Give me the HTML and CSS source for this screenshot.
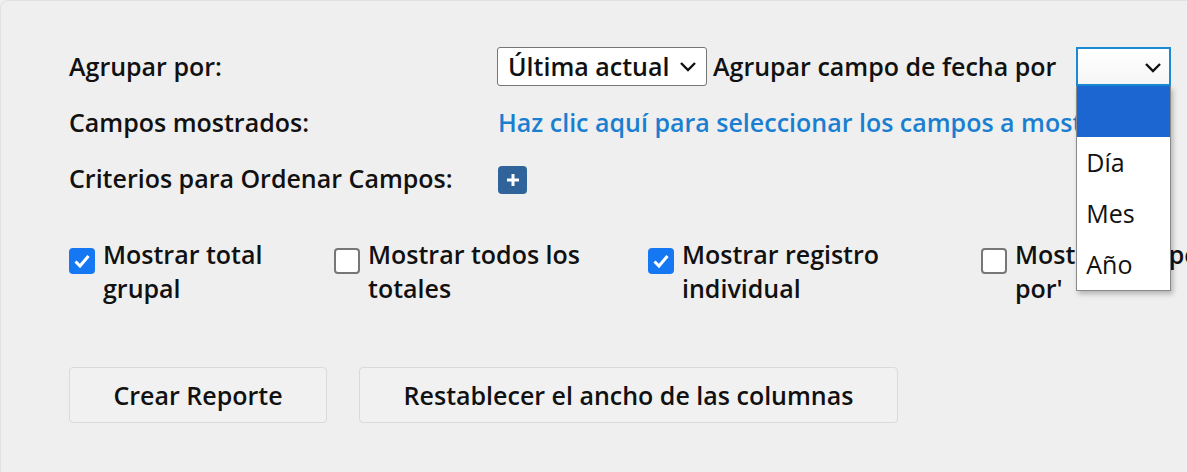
FILE: index.html
```html
<!DOCTYPE html>
<html lang="es">
<head>
    <meta charset="UTF-8">
    <title>Reporte</title>
    <link rel="stylesheet" href="styles.css">
</head>
<body>
    <div class="panel">
        <!-- Opciones de agrupacion -->
        <div class="options">
            <div class="opt-label">Agrupar por:</div>
            <div class="opt-value">
                <div class="select select-group">
                    <span>Última actual</span>
                    <svg class="chev" width="20" height="12" viewBox="0 0 20 12"><path d="M3 2 L10 9 L17 2" fill="none" stroke="#111" stroke-width="2.4"/></svg>
                </div>
                <span class="date-text">Agrupar campo de fecha por</span>
                <div class="date-wrap">
                    <div class="select select-date">
                        <svg class="chev" width="20" height="12" viewBox="0 0 20 12"><path d="M3 2 L10 9 L17 2" fill="none" stroke="#111" stroke-width="2.4"/></svg>
                    </div>
                    <!-- lista abierta -->
                    <ul class="dropdown">
                        <li class="selected">&nbsp;</li>
                        <li>Día</li>
                        <li>Mes</li>
                        <li>Año</li>
                    </ul>
                </div>
            </div>

            <div class="opt-label">Campos mostrados:</div>
            <div class="opt-value">
                <a class="link" href="#">Haz clic aquí para seleccionar los campos a mostrar</a>
            </div>

            <div class="opt-label">Criterios para Ordenar Campos:</div>
            <div class="opt-value">
                <button class="plus" type="button">
                    <svg width="16" height="16" viewBox="0 0 16 16"><path d="M8 2 V14 M2 8 H14" stroke="#fff" stroke-width="3"/></svg>
                </button>
            </div>
        </div>

        <!-- Checkboxes -->
        <div class="checks">
            <label class="check c1"><span class="box on"><svg width="18" height="16" viewBox="0 0 18 16"><path d="M2.5 8.5 L7 13 L15.5 3" fill="none" stroke="#fff" stroke-width="3"/></svg></span><span>Mostrar total grupal</span></label>
            <label class="check c2"><span class="box"></span><span>Mostrar todos los totales</span></label>
            <label class="check c3"><span class="box on"><svg width="18" height="16" viewBox="0 0 18 16"><path d="M2.5 8.5 L7 13 L15.5 3" fill="none" stroke="#fff" stroke-width="3"/></svg></span><span>Mostrar registro individual</span></label>
            <label class="check c4"><span class="box"></span><span>Mostrar campo 'Agrupar por'</span></label>
        </div>

        <div class="actions">
            <button class="btn btn-create" type="button">Crear Reporte</button>
            <button class="btn btn-reset" type="button">Restablecer el ancho de las columnas</button>
        </div>
    </div>
</body>
</html>
```

FILE: styles.css
```css
/* Pagina base */
html, body {
    margin: 0;
    padding: 0;
    background: #efefef;
    font-family: "Open Sans", "Noto Sans", sans-serif;
    color: #111;
    overflow: hidden;
}

.panel {
    width: 1400px;
    height: 472px;
    box-sizing: border-box;
    border-top: 1px solid #e2e2e2;
    border-left: 1px solid #e2e2e2;
    border-radius: 8px 0 0 0;
    padding: 45px 0 0 68px;
    font-size: 25px;
    font-weight: 600;
}

/* Grid de opciones */
.options {
    display: grid;
    grid-template-columns: 428px auto;
    grid-template-rows: 40px 40px 40px;
    row-gap: 16px;
    align-items: center;
}

.opt-value {
    display: flex;
    align-items: center;
}

.select {
    box-sizing: border-box;
    height: 39px;
    background: #fff;
    border: 1px solid #767676;
    border-radius: 3px;
    display: flex;
    align-items: center;
    position: relative;
}

.select-group {
    width: 210px;
    padding-left: 10px;
}

.select .chev {
    position: absolute;
    right: 8px;
    top: 13px;
}

.date-text {
    margin-left: 6px;
    margin-right: 20px;
}

.date-wrap {
    position: relative;
}

.select-date {
    width: 95px;
    border: 2px solid #1a8ad4;
    border-radius: 0;
    background: linear-gradient(#fff, #f6f6f6);
}

.select-date .chev {
    right: 6px;
}

/* Lista desplegada */
.dropdown {
    position: absolute;
    top: 39px;
    left: 0;
    width: 95px;
    box-sizing: border-box;
    margin: 0;
    padding: 0;
    list-style: none;
    background: #fff;
    border: 1px solid #8a8a8a;
    border-top: 0;
    box-shadow: 2px 3px 5px rgba(0, 0, 0, 0.25);
    font-weight: 400;
    z-index: 5;
}

.dropdown li {
    height: 51px;
    line-height: 51px;
    padding-left: 9px;
}

.dropdown li.selected {
    background: #1c66d1;
}

.link {
    color: #1a7fd1;
    text-decoration: none;
    white-space: nowrap;
    margin-left: 1px;
}

.plus {
    width: 29px;
    height: 28px;
    margin: 4px 0 0 1px;
    padding: 0;
    border: none;
    border-radius: 4px;
    background: #2f6399;
    display: flex;
    align-items: center;
    justify-content: center;
}

/* Checkboxes */
.checks {
    display: flex;
    margin-top: 39px;
    line-height: 34px;
}

.check {
    display: flex;
    align-items: flex-start;
    flex: none;
}

.c1 { width: 265px; }
.c2 { width: 314px; }
.c3 { width: 333px; }
.c4 { width: 340px; }

.c1 span:last-child { width: 185px; }
.c2 span:last-child { width: 240px; }
.c3 span:last-child { width: 225px; }
.c4 span:last-child { width: 300px; }

.box {
    flex: none;
    box-sizing: border-box;
    width: 26px;
    height: 26px;
    margin: 11px 8px 0 0;
    border: 2px solid #777;
    border-radius: 4px;
    background: #fff;
    display: flex;
    align-items: center;
    justify-content: center;
}

.box.on {
    border: none;
    background: #1677f2;
}

/* Botones */
.actions {
    display: flex;
    gap: 32px;
    margin-top: 62px;
}

.btn {
    height: 56px;
    box-sizing: border-box;
    border: 1px solid #dadada;
    border-radius: 4px;
    background: #f1f1f1;
    font-family: "Open Sans", "Noto Sans", sans-serif;
    font-size: 25px;
    font-weight: 600;
    color: #111;
}

.btn-create { width: 258px; }
.btn-reset { width: 539px; }
```
